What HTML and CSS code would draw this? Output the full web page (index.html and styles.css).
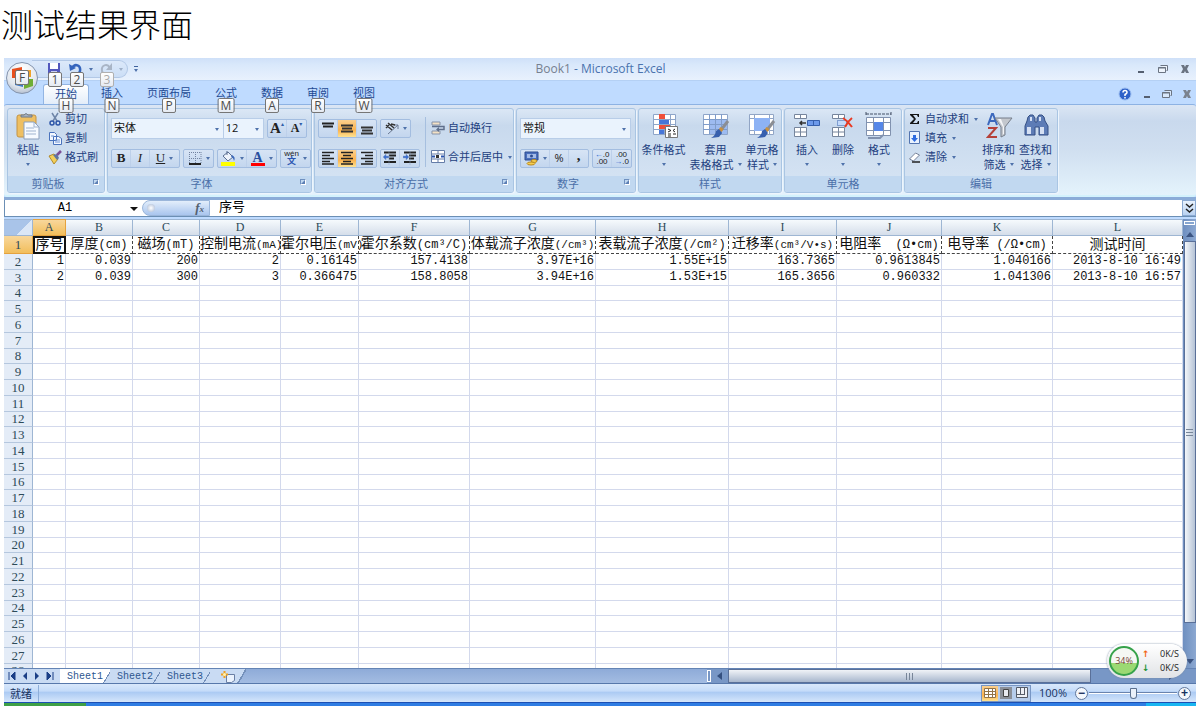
FILE: index.html
```html
<!DOCTYPE html>
<html lang="zh-CN">
<head>
<meta charset="utf-8">
<title>测试结果界面</title>
<link rel="stylesheet" href="styles.css">
</head>
<body>
<h1 class="heading">测试结果界面</h1>
<main class="window">
  <button class="office" aria-label="Office">
    <svg width="34" height="34" viewBox="0 0 34 34"><defs><radialGradient id="orb" cx=".5" cy=".25" r=".9"><stop offset="0" stop-color="#fff"/><stop offset=".6" stop-color="#e1e6ed"/><stop offset="1" stop-color="#98a6bc"/></radialGradient></defs><circle cx="17" cy="17" r="15.5" fill="url(#orb)" stroke="#8494ae"/><path d="M7 8l10-2v11H7z" fill="#e8501e"/><path d="M19 9h7v7h-7z" fill="#f0a32b"/><path d="M10 19h8v7l-8-2z" fill="#3c78c8"/><path d="M19 18h9v7l-9 3z" fill="#6fae35"/></svg>
    <kbd class="tip tip-office">F</kbd>
  </button>
  <header class="titlebar">
    <div class="qat">
      <button class="q" aria-label="保存"><svg width="14" height="14"><path d="M1 1h12v12H1z" fill="#5358bd"/><path d="M3 1h8v6H3z" fill="#fff"/><path d="M4 9h6v4H4z" fill="#c9cdf0"/></svg><kbd class="tip">1</kbd></button>
      <button class="q" aria-label="撤消"><svg width="14" height="14"><path d="M3 6C6 1 12 3 11 9c0 2-2 3-4 4" fill="none" stroke="#3565bd" stroke-width="2.5"/><path d="M0 2l1 7 6-3z" fill="#3565bd"/></svg><kbd class="tip">2</kbd></button><i class="arr"></i>
      <button class="q" aria-label="恢复"><svg width="14" height="14"><path d="M11 6C8 1 2 3 3 9c0 2 2 3 4 4" fill="none" stroke="#a9b5c6" stroke-width="2"/><path d="M13 1v7H7z" fill="#a9b5c6"/></svg><kbd class="tip off">3</kbd></button><i class="arr off"></i>
    </div>
    <button class="more" aria-label="自定义"><i class="bar"></i><i class="arr"></i></button>
    <div class="caption"><span>Book1</span> - Microsoft Excel</div>
    <div class="wctl">
      <button aria-label="最小化"><svg width="10" height="10"><path d="M2 8h6" stroke="#555f70" stroke-width="2"/></svg></button>
      <button aria-label="还原"><svg width="10" height="10"><path d="M2.500 1.500h7v5h-1M.5 3.500h7v5h-7z" fill="#eef4fc" stroke="#6b7482"/><path d="M0 4h8" stroke="#6b7482"/></svg></button>
      <button aria-label="关闭"><svg width="10" height="10"><path d="M1 1h3l1 2 1-2h3L7 5l2 4H6L5 7 4 9H1l2-4z" fill="#6b7482"/></svg></button>
    </div>
  </header>
  <nav class="tabs">
    <button class="tab on">开始<kbd class="tip">H</kbd></button>
    <button class="tab">插入<kbd class="tip">N</kbd></button>
    <button class="tab">页面布局<kbd class="tip">P</kbd></button>
    <button class="tab">公式<kbd class="tip">M</kbd></button>
    <button class="tab">数据<kbd class="tip">A</kbd></button>
    <button class="tab">审阅<kbd class="tip">R</kbd></button>
    <button class="tab">视图<kbd class="tip">W</kbd></button>
    <div class="wctl doc">
      <button aria-label="帮助"><svg width="14" height="14"><circle cx="7" cy="7" r="6" fill="#2f62c9" stroke="#9bbdf0"/><path d="M5 5.500Q5 3.500 7 3.500T9 5.500Q9 6.500 7 7.500V9M7 10v1.500" stroke="#fff" stroke-width="1.500" fill="none"/></svg></button>
      <button aria-label="最小化"><svg width="10" height="10"><path d="M2 8h6" stroke="#555f70" stroke-width="2"/></svg></button>
      <button aria-label="还原"><svg width="10" height="10"><path d="M2.500 1.500h7v5h-1M.5 3.500h7v5h-7z" fill="#d8e8fb" stroke="#6b7482"/><path d="M0 4h8" stroke="#6b7482"/></svg></button>
      <button aria-label="关闭"><svg width="10" height="10"><path d="M1 1h3l1 2 1-2h3L7 5l2 4H6L5 7 4 9H1l2-4z" fill="#7b838f"/></svg></button>
    </div>
  </nav>

  <div class="ribbon">
    <section class="group g-clip">
      <div class="body">
        <button class="big"><svg width="26" height="28"><rect x="2" y="3" width="19" height="22" rx="2" fill="#eebf62" stroke="#c39345"/><path d="M6 5V3h3q2-3 4 0h4v2z" fill="#a9b3c0" stroke="#6d7886"/><path d="M9 10h10l5 5v12H9z" fill="#f6faff" stroke="#8a9fbd"/><path d="M19 10v5h5M11 16h8M11 19h10M11 22h10" fill="none" stroke="#9fb3cf"/></svg><span>粘贴</span><i class="arr"></i></button>
        <div class="list">
          <button class="small"><svg width="14" height="14"><path d="M4 1l5 8M10 1L5 9" stroke="#7086a8" stroke-width="1.500"/><circle cx="4" cy="11" r="2" fill="none" stroke="#2c55a8" stroke-width="1.500"/><circle cx="10" cy="11" r="2" fill="none" stroke="#2c55a8" stroke-width="1.500"/></svg>剪切</button>
          <button class="small"><svg width="14" height="14"><path d="M1.500 1.500h5l2 2v6h-7zM5.500 5.500h5l3 2v6h-8z" fill="#f2f7ff" stroke="#4a73bd"/><path d="M3 5h3M7 9h5M7 11h5" stroke="#6d92d4"/></svg>复制</button>
          <button class="small"><svg width="14" height="14"><path d="M1 6l5-2 4 5-4 5Z" fill="#f3cf59" stroke="#b08a2e"/><path d="M5 5l4-1 2 4-2 2z" fill="#5f76a0"/><path d="M9 5l4-4" stroke="#7a4f96" stroke-width="2.500"/></svg>格式刷</button>
        </div>
      </div>
      <footer>剪贴板<i class="launch"></i></footer>
    </section>

    <section class="group g-font">
      <div class="body rows">
        <div class="line">
          <span class="combo c-name"><select aria-label="字体"><option>宋体</option></select></span><span class="combo c-size"><select aria-label="字号"><option>12</option></select></span>
          <div class="set push"><button class="ser a1" aria-label="增大字号">A<sup>▴</sup></button><button class="ser a2" aria-label="减小字号">A<sup>▾</sup></button></div>
        </div>
        <div class="line">
          <div class="set"><button class="ser"><b>B</b></button><button class="ser"><em>I</em></button><button class="ser wide"><u>U</u><i class="arr"></i></button></div>
          <div class="set"><button class="wide" aria-label="边框"><svg width="14" height="14"><path d="M1.500 1v12M7.500 1v12M13 1v12M1 1.500h12M1 7.500h12" stroke="#7283a0" stroke-dasharray="1 1"/><path d="M1 13h12" stroke="#222" stroke-width="2"/></svg><i class="arr"></i></button></div>
          <div class="set"><button class="wide" aria-label="填充颜色"><svg width="15" height="16"><path d="M2 6l5-4 5 5-5 4z" fill="#eef3fb" stroke="#5b6f92"/><path d="M6 5V1" stroke="#5b6f92"/><path d="M11 5q4 2 2 6-1-4-3-4z" fill="#3c68ba"/><path d="M0 12h14v4H0z" fill="#ff0"/></svg><i class="arr"></i></button><button class="wide" aria-label="字体颜色"><span class="acolor">A</span><i class="arr"></i></button></div>
          <div class="set"><button class="wide wen" aria-label="拼音"><span>wén<br><b>文</b></span><i class="arr"></i></button></div>
        </div>
      </div>
      <footer>字体<i class="launch"></i></footer>
    </section>

    <section class="group g-align">
      <div class="body cols">
        <div class="rows">
          <div class="line">
            <div class="set"><button aria-label="顶端对齐"><svg width="14" height="14"><path d="M1 2.500h12M2 5.500h10M1 8" stroke="#222" stroke-width="2"/></svg></button><button class="hot" aria-label="垂直居中"><svg width="14" height="14"><path d="M1 4.500h12M2 7.500h10M1 10.500h12" stroke="#333" stroke-width="2"/></svg></button><button aria-label="底端对齐"><svg width="14" height="14"><path d="M1 6.500h12M2 9.500h10M1 12.500h12" stroke="#333" stroke-width="2"/></svg></button></div>
            <div class="set"><button class="wide" aria-label="方向"><svg width="14" height="14"><path d="M3 13L13 4M9 4h4v4" fill="none" stroke="#6c7b94"/><path d="M1 4l6 5M3 2l6 5M1 7l3-3M6 3l4 1" fill="none" stroke="#333" stroke-width="1.500"/></svg><i class="arr"></i></button></div>
          </div>
          <div class="line">
            <div class="set"><button aria-label="左对齐"><svg width="14" height="14"><path d="M1 1.500h12M1 4.500h8M1 7.500h12M1 10.500h8M1 13h12" stroke="#222" stroke-width="1.500"/></svg></button><button class="hot" aria-label="居中"><svg width="14" height="14"><path d="M1 1.500h12M3 4.500h8M1 7.500h12M3 10.500h8M1 13h12" stroke="#222" stroke-width="1.500"/></svg></button><button aria-label="右对齐"><svg width="14" height="14"><path d="M1 1.500h12M5 4.500h8M1 7.500h12M5 10.500h8M1 13h12" stroke="#222" stroke-width="1.500"/></svg></button></div>
            <div class="set"><button aria-label="减少缩进"><svg width="14" height="14"><path d="M1 1.500h12M6 4.500h7M6 7.500h5M1 11h12" stroke="#222" stroke-width="2"/><path d="M0 6l3-3v2h3v2H3v2zM6 0v14" fill="#3c6fd0" stroke="#8ba2c5" stroke-width=".5"/></svg></button><button aria-label="增加缩进"><svg width="14" height="14"><path d="M1 1.500h12M6 4.500h7M6 7.500h5M1 11h12" stroke="#222" stroke-width="2"/><path d="M6 6L3 3v2H0v2h3v2zM7 0v14" fill="#3c6fd0" stroke="#8ba2c5" stroke-width=".5"/></svg></button></div>
          </div>
        </div>
        <div class="rows divided">
          <button class="small"><svg width="14" height="14"><path d="M1 1h8v3H1zM1 10h8v3H1z" fill="#f3e1c5" stroke="#8793a8"/><path d="M1 5.500h12v3H6" fill="none" stroke="#5f6f8c" stroke-width="1.500"/><path d="M8 6v5L5 8.500z" fill="#5f6f8c"/></svg>自动换行</button>
          <button class="small"><svg width="14" height="14"><path d="M.5.5h13v12H.5zM.5 4h13M.5 9h13M7 0v4M7 9v4" fill="#fff" stroke="#657da8"/><path d="M1 6.500h3M10 6.500h3" stroke="#2a55ae" stroke-width="2"/><path d="M5 8V5h3v3z" fill="#333"/></svg>合并后居中<i class="arr"></i></button>
        </div>
      </div>
      <footer>对齐方式<i class="launch"></i></footer>
    </section>

    <section class="group g-num">
      <div class="body rows">
        <div class="line"><span class="combo c-fmt"><select aria-label="数字格式"><option>常规</option></select></span></div>
        <div class="line">
          <div class="set"><button class="wide" aria-label="货币"><svg width="15" height="15"><path d="M1 1h13v8H1z" fill="#4a6fbc" stroke="#2c4c92"/><path d="M3 3h9v4H3z" fill="#a5bce8"/><circle cx="7.500" cy="5" r="1.500" fill="#2c4c92"/><ellipse cx="10" cy="10" rx="3" ry="1.500" fill="#f6cf51" stroke="#b98922"/><ellipse cx="7" cy="12.500" rx="4" ry="1.500" fill="#f6cf51" stroke="#b98922"/></svg><i class="arr"></i></button><button class="pct">%</button><button class="comma">,</button></div>
          <div class="set"><button class="dec" aria-label="增加小数位数"><span><b>←</b>.0<br>.00</span></button><button class="dec" aria-label="减少小数位数"><span>.00<br><b>→</b>.0</span></button></div>
        </div>
      </div>
      <footer>数字<i class="launch"></i></footer>
    </section>

    <section class="group g-style">
      <div class="body bigs">
        <button class="big"><svg width="28" height="28"><path d="M3.500 2.500h22v20h-22zM3 7.500h23M3 12.500h23M3 17.500h23M9.500 2v20M14.500 2v20M20.500 2v20" fill="#fff" stroke="#8ea5c9"/><path d="M9 2h6v5H9zM9 13h11v4H9z" fill="#f0503a"/><path d="M9 8h10v4H9zM9 18h5v4H9z" fill="#4776d8"/><path d="M15.500 14.500h12v11h-12z" fill="#fff" stroke="#777"/><path d="M18 17l3 1.500-3 1.500M18 22h3M25 17l-2 1.500 2 1.500M23 22h3M18 24h3" fill="none" stroke="#222"/></svg><span>条件格式</span><i class="arr"></i></button>
        <button class="big"><svg width="28" height="28"><path d="M1.500 2.500h24v20h-24z" fill="#fff" stroke="#8ea5c9"/><path d="M8 7h17v15H8z" fill="#9dbbf0"/><path d="M1 7.500h24M1 12.500h24M1 17.500h24M7.500 2v20M13.500 2v20M19.500 2v20" stroke="#7f9cca"/><path d="M26 9l-7 9" stroke="#8b8e94" stroke-width="3"/><path d="M20 16l-2 3" stroke="#c89141" stroke-width="4"/><path d="M17 17l3 4-3 4-8 1q5-3 5-7z" fill="#365fae"/></svg><span>套用</span><span>表格格式<i class="arr"></i></span></button>
        <button class="big"><svg width="28" height="28"><path d="M1.500 2.500h24v20h-24zM1 6.500h24M1 18.500h24M6.500 2v20M21.500 2v20" fill="#fff" stroke="#91a5c5"/><path d="M6 6h16v13H6z" fill="#8db2f4"/><path d="M26 9l-7 9" stroke="#8b8e94" stroke-width="3"/><path d="M20 16l-2 3" stroke="#c89141" stroke-width="4"/><path d="M17 17l3 4-3 4-8 1q5-3 5-7z" fill="#365fae"/></svg><span>单元格</span><span>样式<i class="arr"></i></span></button>
      </div>
      <footer>样式</footer>
    </section>

    <section class="group g-cells">
      <div class="body bigs">
        <button class="big"><svg width="28" height="28"><path d="M1.500 2.500h12v4h-12zM7.500 2v4M1.500 15.500h12v9h-12zM1 20h12M7.500 15v9" fill="#fff" stroke="#76859c"/><path d="M14.500 8.500h12v5h-12zM20.500 8v5" fill="#6d9aeb" stroke="#3660ad"/><path d="M13 11H7M9 9l-2 2 2 2" fill="none" stroke="#333" stroke-width="1.500"/></svg><span>插入</span><i class="arr"></i></button>
        <button class="big"><svg width="28" height="28"><path d="M3.500 2.500h12v4h-12zM9.500 2v4M3.500 15.500h12v9h-12zM3 20h12M9.500 15v9" fill="#fff" stroke="#76859c"/><path d="M8.500 8.500h9v5h-9z" fill="#c4dafb" stroke="#3660ad" stroke-dasharray="1 1"/><path d="M14 6q5 3 9 9M23 6q-4 3-7 9" fill="none" stroke="#e93a23" stroke-width="2"/></svg><span>删除</span><i class="arr"></i></button>
        <button class="big"><svg width="28" height="28"><path d="M1 2h25M1 0v4M26 0v4" stroke="#445066" stroke-dasharray="3 1"/><path d="M1.500 5.500h24v18h-24zM1 10.500h24M1 18.500h24M8.500 5v19M18.500 5v19" fill="#fff" stroke="#8192af"/><path d="M9 10h9v9H9z" fill="#5687e8"/><path d="M3 26h12l3-3" fill="none" stroke="#8192af" stroke-width="2"/></svg><span>格式</span><i class="arr"></i></button>
      </div>
      <footer>单元格</footer>
    </section>

    <section class="group g-edit">
      <div class="body">
        <div class="list">
          <button class="small"><svg width="14" height="14"><path d="M2 2h9v3h-1L9 3H5l3 4-3 4h4l1-2h1v3H2v-1l4-4-4-4z" fill="#151515"/></svg>自动求和<i class="arr"></i></button>
          <button class="small"><svg width="14" height="14"><path d="M1.500.5h10v12h-10z" fill="#e9f2ff" stroke="#5374b0"/><path d="M5 4h3v3h2l-3.500 4L3 7h2z" fill="#2d6be0"/></svg>填充<i class="arr"></i></button>
          <button class="small"><svg width="14" height="14"><path d="M1.500 9l6-6 4 2-6 6z" fill="#fff" stroke="#77829a"/><path d="M4 12h8" stroke="#222" stroke-width="1.500"/></svg>清除<i class="arr"></i></button>
        </div>
        <button class="big"><svg width="28" height="28"><path d="M3 13L7 2h1l4 11M4 9h6" fill="none" stroke="#3b68bd" stroke-width="2"/><path d="M3 16h8l-8 9h9" fill="none" stroke="#b5413a" stroke-width="2"/><path d="M10 6h17l-7 9v8l-4 2V15z" fill="#c3c7cd" stroke="#777f8b"/><path d="M13 7h3l3 8v7h-1v-7z" fill="#f4f5f7"/></svg><span>排序和</span><span>筛选<i class="arr"></i></span></button>
        <button class="big"><svg width="28" height="28"><path d="M6 5l2-2h3l2 3v4h2V6l2-3h3l2 2 1 4 3 5v9h-9v-8h-4v8H3v-9l2-5z" fill="#5d7cb6" stroke="#344f84"/><path d="M5 15h4v7H5zM18 15h4v7h-4zM8 5h2v4H8zM17 5h2v4h-2z" fill="#d5e0f3"/></svg><span>查找和</span><span>选择<i class="arr"></i></span></button>
      </div>
      <footer>编辑</footer>
    </section>
  </div>

  <div class="formula">
    <label class="namebox"><input value="A1" aria-label="名称框"></label>
    <button class="fx" aria-label="插入函数"><span class="knob"></span><em>f<small>x</small></em></button>
    <input class="fline" value="序号" aria-label="编辑栏">
    <button class="expand" aria-label="展开编辑栏"><svg width="9" height="11"><path d="M1 1l3.500 3L8 1M1 6l3.500 3L8 6" fill="none" stroke="#222" stroke-width="1.500"/></svg></button>
  </div>

  <div class="work">
    <div class="sheet">
      <table class="grid">
        <colgroup><col class="w29"><col class="w33"><col class="w67"><col class="w67"><col class="w81"><col class="w78"><col class="w111"><col class="w126"><col class="w133"><col class="w108"><col class="w105"><col class="w111"><col class="w130"></colgroup>
        <thead><tr><th class="corner"></th><th class="sel">A</th><th>B</th><th>C</th><th>D</th><th>E</th><th>F</th><th>G</th><th>H</th><th>I</th><th>J</th><th>K</th><th>L</th></tr></thead>
        <tbody id="rows">
          <tr class="names"><th class="sel">1</th><td class="cur">序号</td><td>厚度<span>(cm)</span></td><td>磁场<span>(mT)</span></td><td class="tight">控制电流<span>(mA)</span></td><td class="tight">霍尔电压<span>(mV)</span></td><td>霍尔系数<span>(cm³/C)</span></td><td>体载流子浓度<span class="fit">(/cm³)</span></td><td>表载流子浓度<span>(/cm²)</span></td><td>迁移率<span class="fit">(cm³/V•s)</span></td><td>电阻率<span>  (Ω•cm)</span></td><td>电导率<span> (/Ω•cm)</span></td><td>测试时间</td></tr>
          <tr><th>2</th><td>1</td><td>0.039</td><td>200</td><td>2</td><td>0.16145</td><td>157.4138</td><td>3.97E+16</td><td>1.55E+15</td><td>163.7365</td><td>0.9613845</td><td>1.040166</td><td>2013-8-10 16:49</td></tr>
          <tr><th>3</th><td>2</td><td>0.039</td><td>300</td><td>3</td><td>0.366475</td><td>158.8058</td><td>3.94E+16</td><td>1.53E+15</td><td>165.3656</td><td>0.960332</td><td>1.041306</td><td>2013-8-10 16:57</td></tr>
        </tbody>
      </table>
    </div>
    <div class="vscroll"><i class="split"></i><i class="up"></i><div class="vthumb"><i class="grip"></i></div><i class="down"></i></div>
  </div>

  <div class="bottom">
    <div class="nav">
      <button aria-label="第一张"><svg width="8" height="8"><path d="M1 0v8M7 0L3 4l4 4z" fill="#1b3f86" stroke="#1b3f86"/></svg></button>
      <button aria-label="上一张"><svg width="8" height="8"><path d="M6 0L2 4l4 4z" fill="#1b3f86"/></svg></button>
      <button aria-label="下一张"><svg width="8" height="8"><path d="M2 0l4 4-4 4z" fill="#1b3f86"/></svg></button>
      <button aria-label="最后一张"><svg width="8" height="8"><path d="M7 0v8M1 0l4 4-4 4z" fill="#1b3f86" stroke="#1b3f86"/></svg></button>
    </div>
    <button class="stab on"><span>Sheet1</span></button><button class="stab"><span>Sheet2</span></button><button class="stab"><span>Sheet3</span></button><button class="stab new" aria-label="插入工作表"><svg width="14" height="12"><path d="M5.500 3.500h8v6l-3 2h-5z" fill="#eaf2fd" stroke="#6a7fa5"/><path d="M3.500 0v7M0 3.500h7" stroke="#f0a020" stroke-width="2"/><circle cx="3.500" cy="3.500" r="1.500" fill="#fff3b0"/></svg></button>
    <div class="hscroll"><i class="hsplit"></i><i class="left"></i><div class="hthumb"><i class="grip v"></i></div><i class="right"></i></div>
  </div>
  <footer class="status">
    <span class="ready">就绪</span>
    <div class="views">
      <button class="hot" aria-label="普通"><svg width="14" height="12"><path d="M1.500 1.500h11v9h-11zM1 4.500h11M1 7.500h11M5.500 1v9M9.500 1v9" fill="#fff" stroke="#927448"/></svg></button>
      <button aria-label="页面布局"><svg width="14" height="12"><path d="M1 0h12v12H1z" fill="#8a8f98"/><path d="M4.500 2.500h5v7h-5z" fill="#e8eaf0" stroke="#444"/></svg></button>
      <button aria-label="分页预览"><svg width="14" height="12"><path d="M1.500.5h11v10h-11zM5.500 0v7M9.500 0v7M2 7.500h8" fill="#eef1f6" stroke="#555c68"/></svg></button>
    </div>
    <button class="zoomtext">100%</button>
    <button class="round" aria-label="缩小">−</button>
    <input class="slider" type="range" min="0" max="100" value="50" aria-label="显示比例">
    <button class="round" aria-label="放大">+</button>
  </footer>
  <div class="taskbar"><i class="start"></i><i class="tray"></i></div>
  <aside class="meter">
    <span class="ball">34%</span>
    <div class="rates"><span><b class="upc">↑</b>0K/S</span><span><b class="dnc">↓</b>0K/S</span></div>
  </aside>
</main>
<script src="script.js"></script>
</body>
</html>
```
FILE: styles.css
```css
* { box-sizing: border-box; }
body {
  margin: 0; height: 100vh; display: flex; flex-direction: column; overflow: hidden;
  background: #fff; color: #1e3f80;
  font: 11px/16px "Open Sans", "Noto Sans CJK SC", sans-serif;
}
button, input, select { font: inherit; color: inherit; margin: 0; padding: 0; border: 0; background: none; border-radius: 0; }
button { display: inline-flex; align-items: center; justify-content: center; white-space: nowrap; }
input { min-width: 0; outline: 0; }
svg { display: block; flex: none; }
.heading {
  margin: 0; height: 58px; padding-left: 1px; color: #000;
  font: 300 32px/52px "Liberation Serif", "Noto Sans CJK SC", serif;
}
.window { position: relative; flex: 1; min-height: 0; display: flex; flex-direction: column; margin: 0 7px 1px 4px; background: #bfdbff; }

.arr { flex: none; display: inline-block; border: 2px solid transparent; border-top: 3px solid #4f72ab; border-bottom: 0; }
.arr.off { border-top-color: #9fb0c8; }
.tip {
  position: absolute; z-index: 3; left: 50%; bottom: -9px; transform: translateX(-50%);
  height: 15px; min-width: 14px; padding: 0 2px; border: 1px solid #767676; border-radius: 2px;
  background: linear-gradient(#fff, #e5eaf2); color: #4c4c4c; font: 12px/13px "Open Sans", sans-serif; text-align: center;
}
.tip.off { color: #aaa; border-color: #b0b0b0; }

.office { position: absolute; left: 1px; top: 3px; z-index: 4; }
.tip-office { bottom: 10px; }
.titlebar { flex: none; height: 23px; display: flex; align-items: center; background: linear-gradient(#cfe0f8, #d9e8fb 30%, #e8f1fd); border-bottom: 1px solid #b4d0f4; }
.qat { position: relative; display: flex; align-items: center; gap: 4px; height: 18px; margin-left: 28px; padding: 0 4px 0 13px; border: 1px solid #b2c8e6; border-left: 0; border-radius: 0 9px 9px 0; background: linear-gradient(#dce9fa, #cbdef6); }
.q { position: relative; width: 18px; height: 18px; }
.q .tip { left: 10px; bottom: -9px; }
.more { flex-direction: column; gap: 2px; margin-left: 6px; }
.bar { width: 4px; height: 1px; background: #3f629d; }
.caption { flex: 1; margin-left: 5px; text-align: center; font-size: 12px; color: #4a73ae; padding-right: 78px; }
.caption span { color: #76808f; }
.wctl { display: flex; gap: 12px; padding-right: 6px; }
.wctl.doc { gap: 10px; margin-left: auto; align-items: center; padding-right: 4px; }

.tabs { flex: none; height: 23px; display: flex; align-items: flex-end; padding-left: 39px; background: #bfdbff; }
.tab { position: relative; height: 20px; padding: 0 12px 3px; color: #1e4a94; }
.tab.on { background: linear-gradient(#fff, #e3edf9); border: 1px solid #93b5e3; border-bottom: 0; border-radius: 3px 3px 0 0; padding: 0 11px 2px; }
.tabs .wctl { height: 20px; }

.ribbon { flex: none; display: flex; gap: 2px; height: 93px; padding: 3px 3px 2px; border-top: 1px solid #8db2e3; border-radius: 3px; background: linear-gradient(#dbe6f4, #c9d9ed 18%, #d0dff0 50%, #e4f3fc); border-bottom: 2px solid #d3f2fd; }
.group { display: flex; flex-direction: column; border: 1px solid #a9c5e3; border-radius: 3px; background: linear-gradient(#dbe7f5, #c8d9ed 20%, #d7e5f4); box-shadow: 1px 1px 0 #edf5fd; overflow: hidden; }
.group footer { position: relative; flex: none; height: 16px; line-height: 16px; text-align: center; background: #c1d8f0; color: #4a6fa8; }
.g-clip footer, .g-font footer, .g-align footer, .g-num footer { padding-right: 16px; }
.launch { position: absolute; right: 5px; top: 3px; width: 6px; height: 6px; border: 1px solid #6f90bf; border-right-color: #fff; border-bottom-color: #fff; }
.launch::after { content: ""; position: absolute; right: 0; bottom: 0; border: 2px solid #5c7fb4; border-top-color: transparent; border-left-color: transparent; }
.body { flex: 1; display: flex; min-height: 0; }
.g-clip { width: 98px; } .g-font { width: 205px; } .g-align { width: 200px; } .g-num { width: 120px; }
.g-style { width: 144px; } .g-cells { width: 118px; } .g-edit { width: 154px; }
.big { flex-direction: column; justify-content: flex-start; padding: 3px 0 0; line-height: 15px; }
.big svg { margin-bottom: 2px; }
.big > .arr { margin-top: 6px; }
.big span .arr { margin: 0 0 3px 4px; }
.g-clip .big { width: 40px; }
.list { display: flex; flex-direction: column; gap: 3px; padding-top: 2px; }
.small { gap: 3px; height: 16px; justify-content: flex-start; }
.small .arr { margin-left: 2px; }
.bigs { justify-content: space-evenly; }
.g-style .body { gap: 4px; justify-content: center; }
.g-edit .body { gap: 4px; padding-left: 3px; }

.rows { display: flex; flex-direction: column; gap: 10px; padding: 9px 4px 0 3px; }
.body.rows { padding-left: 3px; }
.line { display: flex; gap: 3px; height: 20px; align-items: center; }
.set { display: flex; height: 19px; border: 1px solid #a3bde0; border-radius: 2px; background: linear-gradient(#d7e4f5, #c3d6ee); }
.set button { width: 19px; height: 17px; border-right: 1px solid #bdd0ea; }
.set button:last-child { border-right: 0; }
.set .wide { width: 29px; gap: 4px; }
.set .hot, .views .hot { background: linear-gradient(#fbd08f, #fbb24e 60%, #fde394); }
.push { margin-left: auto; }
.combo { position: relative; display: flex; background: #eaf3fd; border: 1px solid #b8cde8; height: 21px; }
.combo::after { content: ""; position: absolute; right: 4px; top: 9px; border: 2px solid transparent; border-top: 3px solid #4f72ab; border-bottom: 0; }
.combo select { appearance: none; width: 100%; padding-left: 2px; color: #111; outline: 0; }
.c-name { width: 115px; } .c-size { width: 42px; margin-left: -4px; } .c-fmt { width: 112px; }
.ser { font-family: "Liberation Serif", serif; font-size: 13px; color: #222; }
.a1 { font-size: 15px; font-weight: bold; } .a2 { font-size: 12px; font-weight: bold; }
.ser sup { font: 6px/6px "DejaVu Sans", sans-serif; color: #2f5da8; margin-bottom: 8px; }
.acolor { width: 14px; height: 15px; border-bottom: 3px solid #f00; font: bold 14px/13px "Liberation Serif", serif; color: #2a4f9e; }
.wen span { font: 8px/7px "Liberation Sans", "Noto Sans CJK SC", sans-serif; color: #222; }
.wen b { font-size: 9px; line-height: 9px; color: #2b55b0; }
.pct { color: #222; } .comma { color: #222; font: bold 15px/10px "Liberation Serif", serif; }
.set .comma { padding-bottom: 6px; }
.dec span { font: 8px/7px "Liberation Sans", sans-serif; color: #222; }
.dec b { color: #2463cf; }
.divided { margin: 8px 0 9px 5px; padding: 1px 0 0 5px; border-left: 1px solid #a6bfdf; }
.divided .small { height: 20px; }
.cols > .rows:first-child { padding-right: 0; }

.formula { flex: none; display: flex; height: 20px; border-top: 3px solid #8bacd8; background: #fff; color: #000; border-bottom: 1px solid #6b8fb5; }
.namebox { position: relative; width: 138px; border-left: 1px solid #6b8fb5; display: flex; }
.namebox input { width: 120px; text-align: center; font: 12px/18px "Liberation Mono", monospace; }
.namebox::after { content: ""; position: absolute; right: 4px; top: 7px; border: 4px solid transparent; border-top-color: #111; border-bottom: 0; }
.fx { width: 68px; border-radius: 8px 0 0 8px; justify-content: space-between; padding: 0 5px 0 4px; background: linear-gradient(#e3eefb, #a9c5ee); border: 1px solid #9bb6da; }
.knob { width: 8px; height: 8px; border-radius: 50%; background: radial-gradient(#fff, #a7b7d2); }
.fx em { font: italic bold 13px/13px "Liberation Serif", serif; color: #54606f; }
.fx small { font-size: 9px; }
.fline { flex: 1; padding-left: 9px; font: 13px/16px "Liberation Mono", "Noto Sans CJK SC", monospace; }
.expand { width: 14px; background: linear-gradient(#e8f2fd, #b9d2f1); border: 1px solid #8aa9d2; }

.work { flex: 1; min-height: 0; display: flex; padding-top: 2px; border-bottom: 1px solid #6484b5; }
.sheet { flex: 1; overflow: hidden; background: #fff; }
.grid { width: 100%; table-layout: fixed; border-collapse: separate; border-spacing: 0; color: #111; font: 12px/15px "Liberation Mono", "Noto Sans CJK SC", monospace; }
.w29 { width: 29px; } .w33 { width: 33px; } .w67 { width: 67px; } .w81 { width: 81px; } .w78 { width: 78px; }
.w111 { width: 111px; } .w126 { width: 126px; } .w133 { width: 133px; } .w108 { width: 108px; } .w105 { width: 105px; } .w130 { width: 130px; }
.grid th, .grid td { padding: 0; height: 16px; line-height: 15px; white-space: nowrap; }
.grid tr:nth-child(4n) > * { height: 15px; line-height: 14px; }
.grid td { border-right: 1px solid #d3d9ec; border-bottom: 1px solid #d3d9ec; text-align: right; padding-right: 1px; }
.grid th { font-family: "Liberation Serif", serif; font-weight: normal; color: #2d4a58; border-right: 1px solid #9eb6d3; border-bottom: 1px solid #b5c7de; background: #e4ecf7; }
.grid tbody th { font-size: 13px; }
.grid thead th { height: 17px; background: linear-gradient(#f6fafd, #d5deea); border-bottom-color: #9eb6d3; border-top: 1px solid #9eb6d3; }
.grid thead .corner { background: linear-gradient(135deg, #a9c4e9 65%, #dbe7f7 65%); }
.grid th.sel, .grid thead th.sel { background: linear-gradient(#f8d79c, #f2be5b); border-color: #e5a23e; }
.grid .names > * { height: 17px; line-height: 16px; }
.grid .names td { font-size: 14px; text-align: center; padding: 0; border-right: 1px dashed #444; border-bottom: 1px dashed #444; }
.grid .names td.cur { border: 2px solid #111; line-height: 13px; }
.names span { font-size: 12px; white-space: pre; }
.names .tight span, .names .fit { font-size: 11px; }

.vscroll { width: 13px; display: flex; flex-direction: column; align-items: center; background: linear-gradient(90deg, #6e8fc0, #8ca8d1); padding-bottom: 4px; }
.split { width: 11px; height: 4px; margin-top: 2px; border: 1px solid #fff; background: #87a6d0; }
.up { margin: 7px 0 4px; border: 4px solid transparent; border-top: 0; border-bottom: 5px solid #3b5482; }
.vthumb { flex: 1; width: 12px; margin-bottom: 36px; display: flex; align-items: center; justify-content: center; border: 1px solid #5a7099; background: linear-gradient(90deg, #f3f6fa, #b5c3d6); }
.grip { width: 7px; height: 7px; background: repeating-linear-gradient(#788699 0 1px, transparent 1px 3px); }
.grip.v { background: repeating-linear-gradient(90deg, #788699 0 1px, transparent 1px 3px); }
.down { border: 4px solid transparent; border-bottom: 0; border-top: 5px solid #3b5482; }

.bottom { flex: none; height: 14px; display: flex; background: linear-gradient(#8eabd8, #a3bce2); }
.nav { width: 56px; display: flex; align-items: center; justify-content: space-between; padding: 0 6px 0 4px; background: #c9dbf3; }
.stab { width: 50px; height: 14px; padding-top: 2px; color: #2d568f; font: 10px/12px "Liberation Mono", monospace; background: linear-gradient(120deg, #c9dbf3 88%, #7490ba 88%, #7490ba 90%, #c9dbf3 90%); }
.stab.on { background: linear-gradient(120deg, #fff 88%, #7490ba 88%, #7490ba 90%, #c9dbf3 90%); }
.stab.new { width: 36px; background: linear-gradient(120deg, #c9dbf3 80%, #7490ba 80%, #7490ba 84%, transparent 84%); }
.hscroll { margin-left: auto; width: 41%; display: flex; align-items: center; background: #7897c6; }
.hsplit { width: 4px; height: 12px; border: 1px solid #fff; }
.left { margin: 0 6px; border: 4px solid transparent; border-left: 0; border-right: 5px solid #35507f; }
.hthumb { flex: 1; height: 14px; display: flex; align-items: center; justify-content: center; border: 1px solid #5a7099; background: linear-gradient(#f0f3f7, #a8b7cd); }
.right { margin: 0 22px 0 78px; border: 4px solid transparent; border-right: 0; border-left: 5px solid #35507f; }

.status { flex: none; height: 19px; display: flex; align-items: center; background: linear-gradient(#d9e8fb, #c4dbf9 40%, #abcaf3 45%, #d5e6fb); border-top: 1px solid #5778ab; color: #17325f; }
.ready { width: 35px; padding-left: 6px; line-height: 17px; border-right: 1px solid #8eaed9; }
.views { margin-left: auto; display: flex; border: 1px solid #7896c4; background: #b6cdec; }
.views button { width: 16px; height: 15px; }
.zoomtext { margin: 0 8px; font-size: 11px; }
.round { width: 13px; height: 13px; border-radius: 50%; border: 1px solid #61779c; background: #f4f8fd; font: bold 12px/10px "Liberation Sans", sans-serif; }
.round:last-child { margin-right: 5px; }
.slider { appearance: none; width: 88px; height: 14px; margin: 0 1px; background: linear-gradient(transparent 6px, #6983ad 6px, #6983ad 7px, #fff 7px, #fff 8px, transparent 8px); }
.slider::-webkit-slider-thumb { appearance: none; width: 7px; height: 11px; border: 1px solid #5a708f; border-radius: 1px 1px 4px 4px; background: #eaf1fa; }
.taskbar { flex: none; height: 4px; display: flex; justify-content: space-between; background: #2f7de3; border-top: 1px solid #1c4fb4; }
.start { width: 82px; background: #3fa046; }
.tray { width: 50px; background: #18b6f2; }

.meter { position: absolute; right: 9px; bottom: 28px; z-index: 5; width: 80px; height: 34px; display: flex; align-items: center; border-radius: 17px; background: linear-gradient(#fff, #e1e3e6); box-shadow: 0 0 2px #7788a0; color: #222; }
.ball { flex: none; width: 30px; height: 30px; margin-left: 2px; border: 2px solid #36a24a; border-radius: 50%; background: linear-gradient(#f5f7f3 58%, #9bd973 58%); font-size: 9px; line-height: 26px; text-align: center; color: #753f35; }
.rates { flex: 1; padding: 0 8px 0 3px; }
.rates span { display: flex; justify-content: space-between; font: 9px/14px "Open Sans", sans-serif; }
.rates b { font: bold 9px/14px "DejaVu Sans", sans-serif; }
.upc { color: #f2620f; }
.dnc { color: #219235; }
```
FILE: script.js
```js
const rows = document.getElementById("rows");
for (let n = 4; n <= 28; n++) {
  const tr = document.createElement("tr");
  const th = document.createElement("th");
  th.textContent = n;
  tr.append(th);
  for (let c = 0; c < 12; c++) tr.append(document.createElement("td"));
  rows.append(tr);
}
```
